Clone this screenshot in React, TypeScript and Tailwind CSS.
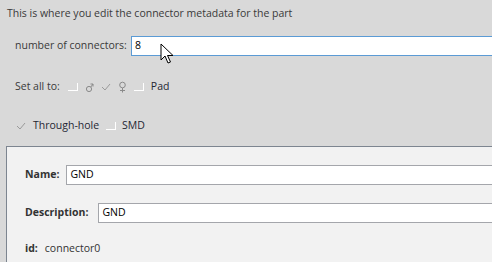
import React from 'react';

const font = { fontFamily: '"Open Sans", "Noto Sans", sans-serif' };

const Box: React.FC = () => (
  <span className="inline-block w-[10px] h-[8px] border-b border-r border-white" />
);

const Check: React.FC = () => (
  <svg width="10" height="8" viewBox="0 0 10 8" className="inline-block">
    <path d="M1 4 L4 7 L9 1" fill="none" stroke="#9a9a9a" strokeWidth="1" />
  </svg>
);

const Male: React.FC = () => (
  <svg width="9" height="11" viewBox="0 0 9 11" className="inline-block">
    <circle cx="4" cy="7" r="2.6" fill="none" stroke="#8a8a8a" strokeWidth="1" />
    <path d="M5.8 5 L8 2 M5.5 2 L8 2 L8 4.5" fill="none" stroke="#8a8a8a" strokeWidth="1" />
  </svg>
);

const Female: React.FC = () => (
  <svg width="9" height="12" viewBox="0 0 9 12" className="inline-block">
    <circle cx="4.5" cy="4" r="2.8" fill="none" stroke="#8a8a8a" strokeWidth="1" />
    <path d="M4.5 7 L4.5 11.5 M2 9.5 L7 9.5" fill="none" stroke="#8a8a8a" strokeWidth="1" />
  </svg>
);

const Cursor: React.FC = () => (
  <svg width="16" height="24" viewBox="0 0 16 24" className="absolute left-[160px] top-[43px]">
    <path
      d="M1 1 L1 17 L5 13 L8 20 L10.5 19 L7.5 12.5 L13 12.5 Z"
      fill="#fff"
      stroke="#000"
      strokeWidth="1"
      strokeLinejoin="round"
    />
  </svg>
);

export default function App() {
  return (
    <div className="relative w-[492px] h-[262px] overflow-hidden bg-[#d9d9d9] text-[10.5px] whitespace-nowrap" style={font}>
      <div className="flex flex-col">
        <div className="h-[16px] mt-[6px] pl-[7px] flex items-center text-[#3a3a3a]">
          This is where you edit the connector metadata for the part
        </div>

        <div className="flex items-center mt-[14px] h-[20px] pl-[15px]">
          <span className="text-[#3a3a3a] w-[116px] shrink-0">number of connectors:</span>
          <div className="flex-1 h-[20px] bg-white border border-[#5b9bd5] border-r-0 flex items-center pl-[3px] text-black">
            8
          </div>
        </div>

        <div className="flex items-center mt-[23px] h-[16px] pl-[15px] text-[#3a3a3a]">
          <span>Set all to:</span>
          <span className="ml-[8px] flex items-center gap-[7px]">
            <Box />
            <Male />
            <Check />
            <Female />
            <Box />
          </span>
          <span className="ml-[7px] text-[#1f2733]">Pad</span>
        </div>

        <div className="flex items-center mt-[23px] h-[16px] pl-[16px] text-[#1f2733]">
          <Check />
          <span className="ml-[7px]">Through-hole</span>
          <span className="ml-[7px] flex items-center"><Box /></span>
          <span className="ml-[6px]">SMD</span>
        </div>

        <div className="ml-[6px] mt-[12px] w-[560px] h-[140px] bg-[#f2f2f2] border border-[#7d8590]">
          <div className="flex items-center mt-[18px] pl-[18px] h-[20px]">
            <span className="font-bold text-[#333]">Name:</span>
            <div className="ml-[7px] flex-1 h-[20px] bg-white border border-[#a4a6ab] flex items-center pl-[3px] text-black">
              GND
            </div>
          </div>
          <div className="flex items-center mt-[18px] pl-[18px] h-[20px]">
            <span className="font-bold text-[#333]">Description:</span>
            <div className="ml-[10px] flex-1 h-[20px] bg-white border border-[#a4a6ab] flex items-center pl-[3px] text-black">
              GND
            </div>
          </div>
          <div className="flex items-center mt-[18px] pl-[18px] h-[16px] text-[#333]">
            <span className="font-bold">id:</span>
            <span className="ml-[7px]">connector0</span>
          </div>
        </div>
      </div>
      <Cursor />
    </div>
  );
}
